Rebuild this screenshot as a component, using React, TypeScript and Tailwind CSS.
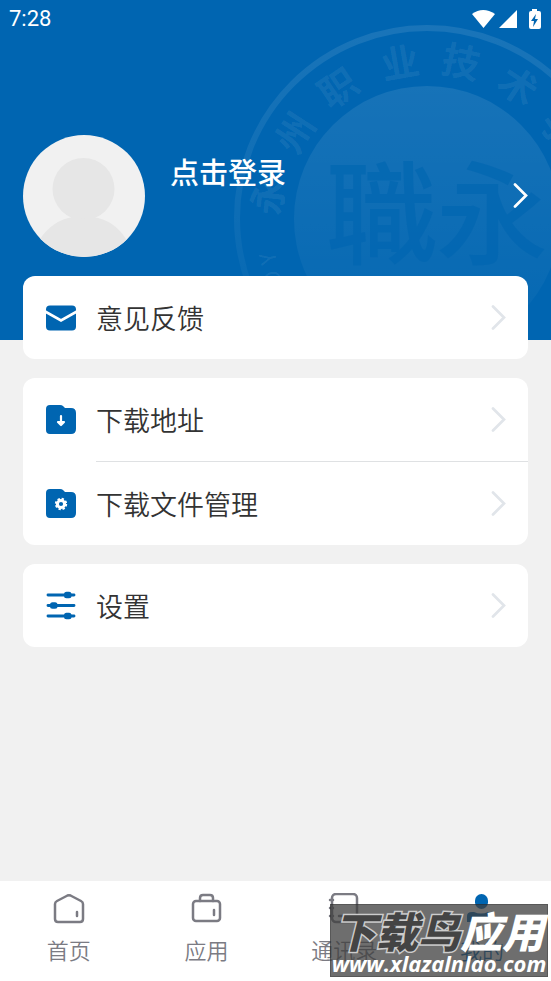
import React from "react";

const CJK = "font-['Noto_Sans_CJK_SC',sans-serif]";

const sealRing = [
  { char: "永", x: 268, y: 196, turn: -84 },
  { char: "州", x: 295, y: 133, turn: -57 },
  { char: "职", x: 338, y: 88, turn: -34 },
  { char: "业", x: 400, y: 63, turn: -10 },
  { char: "技", x: 461, y: 62, turn: 12 },
  { char: "术", x: 518, y: 86, turn: 34 },
  { char: "学", x: 560, y: 130, turn: 57 },
];

function Seal() {
  return (
    <svg
      className="pointer-events-none absolute top-0 right-0"
      width="321"
      height="340"
      viewBox="230 0 321 340"
      fill="none"
      aria-hidden="true"
    >
      <defs>
        <linearGradient id="disc" x1="0" y1="0" x2="0" y2="1">
          <stop offset="0" stopColor="#fff" stopOpacity="0.09" />
          <stop offset="0.8" stopColor="#fff" stopOpacity="0.03" />
          <stop offset="1" stopColor="#fff" stopOpacity="0" />
        </linearGradient>
        <linearGradient id="ring" x1="0" y1="0" x2="0" y2="1">
          <stop offset="0" stopColor="#fff" stopOpacity="0.1" />
          <stop offset="0.7" stopColor="#fff" stopOpacity="0.03" />
          <stop offset="1" stopColor="#fff" stopOpacity="0" />
        </linearGradient>
      </defs>
      <circle cx="427" cy="218" r="190" stroke="url(#ring)" strokeWidth="6" />
      <circle cx="427" cy="219" r="133" fill="url(#disc)" />
      <g
        className="font-['Noto_Sans_CJK_SC',sans-serif] font-bold"
        fill="#fff"
        fillOpacity="0.08"
        fontSize="38"
        textAnchor="middle"
      >
        {sealRing.map((s) => (
          <text key={s.char} x={s.x} y={s.y + 14} transform={`rotate(${s.turn} ${s.x} ${s.y})`}>
            {s.char}
          </text>
        ))}
        <text x="270" y="264" fontSize="22" fontWeight="400" transform="rotate(-104 270 258)">Y</text>
        <text x="274" y="284" fontSize="22" fontWeight="400" transform="rotate(-110 274 278)">O</text>
      </g>
      <g
        className="font-['Noto_Sans_CJK_SC',sans-serif] font-medium"
        fill="#0065b1"
        fillOpacity="0.65"
        fontSize="112"
        textAnchor="middle"
      >
        <text x="382" y="256">職</text>
        <text x="492" y="256">永</text>
      </g>
    </svg>
  );
}

function StatusBar() {
  return (
    <div className="flex h-9 items-center justify-between pt-0.5 pr-2 pl-[9px]">
      <span className="font-[Roboto,sans-serif] text-[22px] leading-6 text-white">7:28</span>
      <svg width="72" height="22" viewBox="0 0 72 22" fill="#fff" aria-hidden="true">
        <path d="M1 6 Q12 -2 24 6 L12.500 20 Z" />
        <path d="M28 20 H46 V2 Z" />
        <path fillRule="evenodd" d="M61 1h5v2h2q2 0 2 2v14q0 2-2 2h-8q-2 0-2-2V5q0-2 2-2h1ZM65 6l-5 7h3l-1 6 5-8h-3Z" />
      </svg>
    </div>
  );
}

function Chevron({ className }: { className: string }) {
  return (
    <svg className={className} width="16" height="26" viewBox="0 0 16 26" fill="none" stroke="currentColor" strokeWidth="2.700" strokeLinecap="round" aria-hidden="true">
      <path d="M2 1.500 13 12.500 2 23.500" />
    </svg>
  );
}

function Avatar() {
  return (
    <svg className="size-[122px] shrink-0 rounded-full" viewBox="0 0 122 122" aria-hidden="true">
      <rect width="122" height="122" fill="#f1f1f1" />
      <circle cx="60.500" cy="54" r="31" fill="#e6e6e6" />
      <path d="M50 82Q60 86 70 82Q91 85 103 104V122H17V104Q30 85 50 82Z" fill="#e6e6e6" />
    </svg>
  );
}

const folder = "M5 1h10q2 0 3 1l2 2h6q5 0 5 5v16q0 5-5 5H5q-4 0-4-4V5q0-4 4-4Z";

function MailIcon() {
  return (
    <svg width="32" height="32" viewBox="0 0 32 32" fill="none" aria-hidden="true">
      <rect x="1" y="3.500" width="30" height="25" rx="4" fill="#0065b1" />
      <path d="M0 9.500 16 18.500 32 9.500" stroke="#fff" strokeWidth="2.800" />
    </svg>
  );
}

function DownloadIcon() {
  return (
    <svg width="32" height="32" viewBox="0 0 32 32" fill="none" aria-hidden="true">
      <path d={folder} fill="#0065b1" />
      <path d="M16 12v8M13 18l3 3 3-3Z" stroke="#fff" strokeWidth="2.200" strokeLinecap="round" strokeLinejoin="round" />
    </svg>
  );
}

function FolderGearIcon() {
  return (
    <svg width="32" height="32" viewBox="0 0 32 32" fill="none" aria-hidden="true">
      <path d={folder} fill="#0065b1" />
      <circle cx="16" cy="16" r="3.600" stroke="#fff" strokeWidth="3" />
      <circle cx="16" cy="16" r="5.200" stroke="#fff" strokeWidth="2" strokeDasharray="2.300 1.784" />
    </svg>
  );
}

function SlidersIcon() {
  return (
    <svg width="32" height="32" viewBox="0 0 32 32" fill="#0065b1" stroke="#0065b1" aria-hidden="true">
      <path d="M3 5h26M3 15.500h26M3 26h26" strokeWidth="2.900" strokeLinecap="round" />
      <g stroke="none">
        <rect x="19" y="1.800" width="7.500" height="6.400" rx="2.500" />
        <rect x="5" y="12.300" width="7.500" height="6.400" rx="2.500" />
        <rect x="19" y="22.800" width="7.500" height="6.400" rx="2.500" />
      </g>
    </svg>
  );
}

function MenuRow({ icon, label, divided }: { icon: React.ReactNode; label: string; divided?: boolean }) {
  return (
    <button type="button" className="flex w-full items-center pl-[22px] text-left">
      {icon}
      <span className={`ml-[19px] flex flex-1 items-center justify-between pr-[21px] ${divided ? "h-[84px] border-b border-[#dfe1e3]" : "h-[83px]"}`}>
        <span className="text-[27px] leading-10 font-[350] text-[#333]">{label}</span>
        <Chevron className="text-[#e1e5ea]" />
      </span>
    </button>
  );
}

function Card({ children }: { children: React.ReactNode }) {
  return <section className="overflow-hidden rounded-xl bg-white">{children}</section>;
}

function Tab({ icon, label, active }: { icon: React.ReactNode; label: string; active?: boolean }) {
  return (
    <a href="#" className={`flex flex-1 flex-col items-center pt-3 ${active ? "text-[#0065b1]" : "text-[#7b7b83]"}`}>
      <svg width="32" height="32" viewBox="0 0 32 32" fill="none" stroke="currentColor" strokeWidth="2.500" strokeLinecap="round" strokeLinejoin="round" aria-hidden="true">
        {icon}
      </svg>
      <span className="mt-2 text-[22px] leading-8 font-[350]">{label}</span>
    </a>
  );
}

function Watermark() {
  return (
    <div className="absolute right-[3px] bottom-1 flex h-[73px] w-[218px] flex-col items-center border border-black/20 bg-[#3d3d3d]/75 whitespace-nowrap">
      <span className="flex text-[42px] leading-[50px] font-black italic">
        <span className="text-[#444] [-webkit-text-stroke:3px_#ccc] [paint-order:stroke_fill]">下载鸟</span>
        <span className="text-white">应用</span>
      </span>
      <span className="-mt-1 font-['Open_Sans',sans-serif] text-[22px] leading-6 font-bold text-white italic">www.xlazalnlao.com</span>
    </div>
  );
}

export default function App() {
  return (
    <div className={`relative flex min-h-screen flex-col bg-[#f1f1f1] ${CJK}`}>
      <header className="relative h-[340px] shrink-0 overflow-hidden bg-[#0065b1]">
        <Seal />
        <div className="relative">
          <StatusBar />
          <button type="button" className="mt-[99px] flex w-full items-center pr-[22px] pl-[23px] text-left text-white">
            <Avatar />
            <span className="mb-[50px] ml-[25px] flex-1 text-[29px] leading-10 font-medium">点击登录</span>
            <Chevron className="text-white" />
          </button>
        </div>
      </header>
      <main className="relative -mt-16 flex flex-1 flex-col gap-[19px] px-[23px]">
        <Card>
          <MenuRow icon={<MailIcon />} label="意见反馈" />
        </Card>
        <Card>
          <MenuRow icon={<DownloadIcon />} label="下载地址" divided />
          <MenuRow icon={<FolderGearIcon />} label="下载文件管理" />
        </Card>
        <Card>
          <MenuRow icon={<SlidersIcon />} label="设置" />
        </Card>
      </main>
      <nav className="flex h-[100px] shrink-0 bg-white">
        <Tab
          label="首页"
          icon={<><path d="M2 11q0-2 2-3L14.500 2.500q1.500-.7 3 0L28 8q2 1 2 3v15q0 3-3 3H5q-3 0-3-3Z" /><path d="M24 19v4" /></>}
        />
        <Tab
          label="应用"
          icon={<><rect x="2" y="8" width="27" height="20" rx="3" /><path d="M9 8V5q0-3 3-3h7q3 0 3 3v3M23 17v5" /></>}
        />
        <Tab
          label="通讯录"
          icon={<><rect x="4" y="1" width="25" height="28" rx="4" /><path d="M2 7h3M2 15h3M2 23h3M11 23h4" /></>}
        />
        <Tab
          label="我的"
          active
          icon={<g fill="currentColor" stroke="none"><rect x="9" y="1" width="13" height="15" rx="6.500" /><path d="M1 29v-6q0-4 5-4h2q7 3 14 0h2q5 0 5 4v6Z" /></g>}
        />
      </nav>
      <Watermark />
    </div>
  );
}
